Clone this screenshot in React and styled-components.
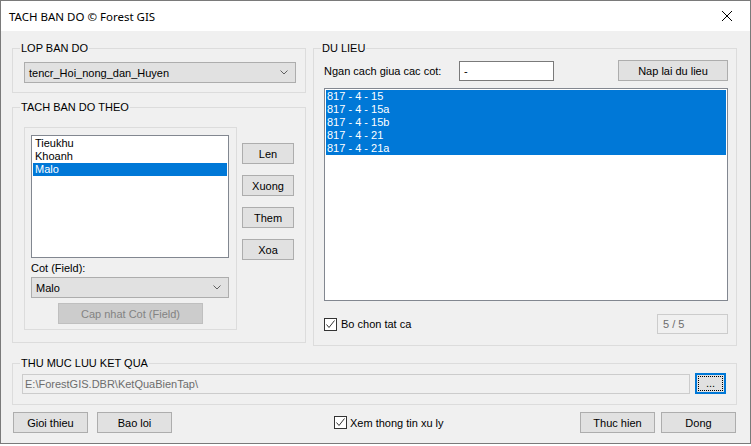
import React from 'react';
import styled, { createGlobalStyle } from 'styled-components';

const Global = createGlobalStyle`
  html, body { margin: 0; padding: 0; background: #ffffff; }
  body {
    font-family: "Liberation Sans", Arial, sans-serif;
    font-size: 11px;
    color: #000;
  }
  * { box-sizing: border-box; }
`;

const Window = styled.div`
  width: 751px;
  height: 444px;
  border: 1px solid #7a7a7a;
  background: #f0f0f0;
  display: flex;
  flex-direction: column;
`;

const TitleBar = styled.div`
  height: 30px;
  background: #ffffff;
  display: flex;
  align-items: center;
  padding-left: 8px;
`;

const Title = styled.div`
  font-family: "Noto Sans", "Open Sans", sans-serif;
  font-size: 11.5px;
  color: #000;
`;

const CloseBox = styled.div`
  margin-left: auto;
  width: 46px;
  height: 30px;
  display: flex;
  align-items: center;
  justify-content: center;
`;

const Body = styled.div`
  flex: 1;
  display: flex;
  flex-direction: column;
  padding: 17px 13px 0 11px;
`;

const TopArea = styled.div`
  display: grid;
  grid-template-columns: 294px 424px;
  column-gap: 7px;
  align-items: start;
`;

const LeftCol = styled.div`
  display: flex;
  flex-direction: column;
  gap: 14px;
`;

const Group = styled.div`
  position: relative;
  border: 1px solid #dcdcdc;
  height: ${(p) => p.$h}px;
  padding: ${(p) => p.$pad};
  margin-top: ${(p) => p.$mt || 0}px;
  display: flex;
  flex-direction: ${(p) => p.$dir || 'column'};
  align-items: flex-start;
`;

const GroupLabel = styled.div`
  position: absolute;
  top: -7px;
  left: 7px;
  padding: 0 1px;
  background: #f0f0f0;
  line-height: 13px;
  white-space: nowrap;
`;

const Combo = styled.div`
  width: ${(p) => p.$w}px;
  height: 21px;
  background: #e1e1e1;
  border: 1px solid #adadad;
  display: flex;
  align-items: center;
  padding: 0 7px 0 4px;
  flex-shrink: 0;
`;

const ComboText = styled.span`
  flex: 1;
`;

const Button = styled.div`
  width: ${(p) => p.$w}px;
  height: 21px;
  background: ${(p) => (p.$disabled ? '#cccccc' : '#e1e1e1')};
  border: 1px solid ${(p) => (p.$disabled ? '#bfbfbf' : '#adadad')};
  color: ${(p) => (p.$disabled ? '#838383' : '#000')};
  display: flex;
  align-items: center;
  justify-content: center;
  flex-shrink: 0;
  margin-left: ${(p) => p.$ml || 0};
  margin-top: ${(p) => p.$mt || 0}px;
`;

const FocusButton = styled.div`
  width: 31px;
  height: 21px;
  margin-left: 5px;
  background: #e1e1e1;
  border: 2px solid #0078d7;
  padding: 1px;
  flex-shrink: 0;
`;

const FocusRect = styled.div`
  width: 100%;
  height: 100%;
  border: 1px dotted #000;
  display: flex;
  align-items: flex-end;
  justify-content: center;
  line-height: 11px;
  padding-bottom: 1px;
`;

const Panel = styled.div`
  width: 213px;
  height: 203px;
  border: 1px solid #dcdcdc;
  padding: 7px 0 0 6px;
  display: flex;
  flex-direction: column;
  align-items: flex-start;
  flex-shrink: 0;
`;

const ButtonCol = styled.div`
  display: flex;
  flex-direction: column;
  gap: 11px;
  margin-left: 5px;
  padding-top: 16px;
`;

const ListBox = styled.div`
  width: ${(p) => p.$w}px;
  height: ${(p) => p.$h}px;
  background: #ffffff;
  border: 1px solid #828790;
  padding: 1px;
  margin-top: ${(p) => p.$mt || 0}px;
  flex-shrink: 0;
`;

const ListItem = styled.div`
  height: 13px;
  line-height: 13px;
  padding-left: ${(p) => p.$pl}px;
  background: ${(p) => (p.$sel ? '#0078d7' : 'transparent')};
  color: ${(p) => (p.$sel ? '#ffffff' : '#000')};
  white-space: nowrap;
`;

const FieldLabel = styled.div`
  line-height: 13px;
  margin-top: 4px;
  margin-bottom: 2px;
`;

const Row = styled.div`
  display: flex;
  align-items: center;
  width: 100%;
  height: ${(p) => p.$h}px;
  margin-top: ${(p) => p.$mt || 0}px;
`;

const InlineLabel = styled.div`
  width: ${(p) => p.$w}px;
  flex-shrink: 0;
`;

const TextBox = styled.div`
  width: ${(p) => p.$w}px;
  height: 20px;
  background: ${(p) => (p.$disabled ? '#f0f0f0' : '#ffffff')};
  border: 1px solid ${(p) => (p.$disabled ? '#cccccc' : '#7a7a7a')};
  color: ${(p) => (p.$disabled ? '#6d6d6d' : '#000')};
  display: flex;
  align-items: center;
  padding-left: ${(p) => p.$pl || 2}px;
  flex-shrink: 0;
  margin-left: ${(p) => p.$ml || 0};
  margin-top: ${(p) => p.$mt || 0}px;
`;

const CheckWrap = styled.div`
  display: flex;
  align-items: center;
  gap: ${(p) => p.$gap}px;
  margin-left: ${(p) => p.$ml || 0}px;
`;

const CheckBoxSquare = styled.div`
  width: 13px;
  height: 13px;
  border: 1px solid #333333;
  background: #ffffff;
  display: flex;
  align-items: center;
  justify-content: center;
`;

const BottomRow = styled.div`
  display: flex;
  align-items: center;
  height: 21px;
  margin-top: 7px;
  padding: 0 1px;
`;

const Spacer = styled.div`
  flex: 1;
`;

const Chevron = () => (
  <svg width="8" height="5" viewBox="0 0 8 5">
    <polyline points="0.5,0.5 4,4 7.5,0.5" fill="none" stroke="#606060" strokeWidth="1" />
  </svg>
);

const Check = ({ label, gap, ml }) => (
  <CheckWrap $gap={gap} $ml={ml}>
    <CheckBoxSquare>
      <svg width="11" height="11" viewBox="0 0 11 11">
        <polyline points="1.5,5.5 4,8.5 9.5,1.5" fill="none" stroke="#333" strokeWidth="1" />
      </svg>
    </CheckBoxSquare>
    <span>{label}</span>
  </CheckWrap>
);

const fields = ['Tieukhu', 'Khoanh', 'Malo'];
const data = ['817 - 4 - 15', '817 - 4 - 15a', '817 - 4 - 15b', '817 - 4 - 21', '817 - 4 - 21a'];

export default function App() {
  return (
    <>
      <Global />
      <Window>
        <TitleBar>
          <Title>TACH BAN DO © Forest GIS</Title>
          <CloseBox>
            <svg width="10" height="10" viewBox="0 0 10 10">
              <line x1="0" y1="0" x2="10" y2="10" stroke="#000" strokeWidth="1" />
              <line x1="10" y1="0" x2="0" y2="10" stroke="#000" strokeWidth="1" />
            </svg>
          </CloseBox>
        </TitleBar>
        <Body>
          <TopArea>
            <LeftCol>
              <Group $h={45} $pad="13px 0 0 11px">
                <GroupLabel>LOP BAN DO</GroupLabel>
                <Combo $w={272}>
                  <ComboText>tencr_Hoi_nong_dan_Huyen</ComboText>
                  <Chevron />
                </Combo>
              </Group>
              <Group $h={236} $pad="19px 0 0 11px" $dir="row">
                <GroupLabel>TACH BAN DO THEO</GroupLabel>
                <Panel>
                  <ListBox $w={198} $h={123}>
                    {fields.map((f) => (
                      <ListItem key={f} $pl={2} $sel={f === 'Malo'}>{f}</ListItem>
                    ))}
                  </ListBox>
                  <FieldLabel>Cot (Field):</FieldLabel>
                  <Combo $w={198}>
                    <ComboText>Malo</ComboText>
                    <Chevron />
                  </Combo>
                  <Button $w={145} $disabled $ml="27px" $mt={5}>Cap nhat Cot (Field)</Button>
                </Panel>
                <ButtonCol>
                  <Button $w={52}>Len</Button>
                  <Button $w={52}>Xuong</Button>
                  <Button $w={52}>Them</Button>
                  <Button $w={52}>Xoa</Button>
                </ButtonCol>
              </Group>
            </LeftCol>
            <Group $h={298} $pad="11px 8px 0 10px">
              <GroupLabel>DU LIEU</GroupLabel>
              <Row $h={21}>
                <InlineLabel $w={135}>Ngan cach giua cac cot:</InlineLabel>
                <TextBox $w={95} $pl={4}>-</TextBox>
                <Button $w={110} $ml="auto">Nap lai du lieu</Button>
              </Row>
              <ListBox $w={404} $h={213} $mt={7}>
                {data.map((d) => (
                  <ListItem key={d} $pl={1} $sel>{d}</ListItem>
                ))}
              </ListBox>
              <Row $h={20} $mt={13}>
                <Check label="Bo chon tat ca" gap={4} />
                <TextBox $w={71} $disabled $ml="auto" $pl={5}>5 / 5</TextBox>
              </Row>
            </Group>
          </TopArea>
          <Group $h={42} $mt={17} $pad="9px 0 0 9px" $dir="row">
            <GroupLabel>THU MUC LUU KET QUA</GroupLabel>
            <TextBox $w={668} $disabled $mt={1}>E:\ForestGIS.DBR\KetQuaBienTap\</TextBox>
            <FocusButton>
              <FocusRect>...</FocusRect>
            </FocusButton>
          </Group>
          <BottomRow>
            <Button $w={75}>Gioi thieu</Button>
            <Button $w={75} $ml="9px">Bao loi</Button>
            <Check label="Xem thong tin xu ly" gap={3} ml={162} />
            <Spacer />
            <Button $w={75}>Thuc hien</Button>
            <Button $w={75} $ml="6px">Dong</Button>
          </BottomRow>
        </Body>
      </Window>
    </>
  );
}
